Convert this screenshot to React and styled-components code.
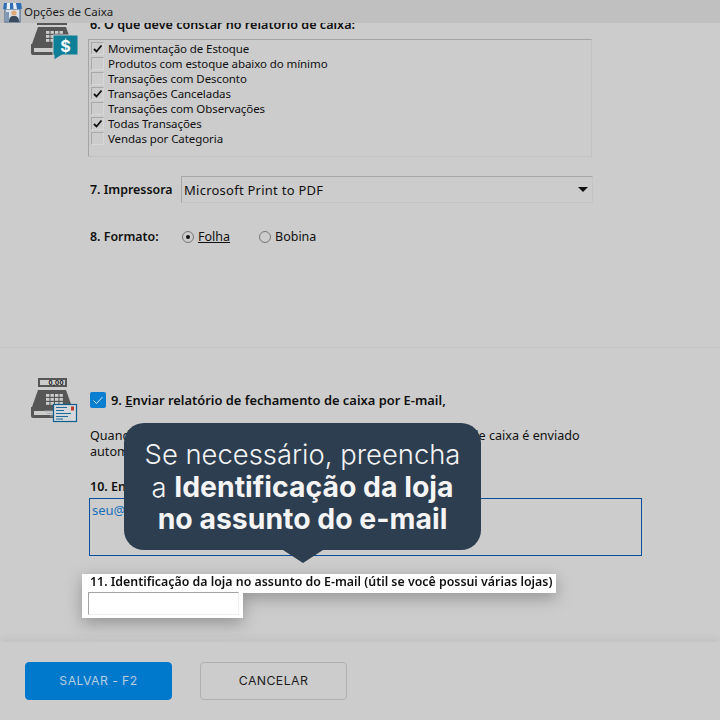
import React from 'react';
import styled, { createGlobalStyle } from 'styled-components';

const GlobalStyle = createGlobalStyle`
  html, body {
    margin: 0;
    padding: 0;
    background: #cccccc;
  }
`;

const Page = styled.div`
  position: relative;
  width: 720px;
  height: 720px;
  overflow: hidden;
  display: flex;
  flex-direction: column;
  background: #cccccc;
  font-family: 'Noto Sans', 'Open Sans', sans-serif;
  color: #101010;
`;

const TitleBar = styled.div`
  position: relative;
  z-index: 2;
  flex: 0 0 23px;
  display: flex;
  align-items: center;
  gap: 2px;
  padding-left: 3px;
  background: #c0c0c0;
  font-size: 11.5px;
  color: #1a1a1a;
`;

const PrintSection = styled.section`
  flex: 0 0 324px;
  display: flex;
  overflow: hidden;
  padding-left: 30px;
  border-bottom: 1px solid #c2c2c2;
`;

const IconColumn = styled.div`
  flex: 0 0 ${props => props.width}px;
`;

const Content = styled.div`
  flex: 1;
  margin-top: -7px;
`;

const Heading = styled.div`
  height: 18px;
  line-height: 18px;
  margin-left: 2px;
  font-size: 12.6px;
  font-weight: 600;
`;

const CheckList = styled.div`
  width: 500px;
  height: 115px;
  margin-top: 5px;
  padding: 1px 0 0 2px;
  border: 1px solid #a4a4a4;
  border-right-color: #c2c2c2;
  border-bottom-color: #c2c2c2;
`;

const CheckRow = styled.div`
  display: flex;
  align-items: center;
  gap: 4px;
  height: 15px;
  font-size: 11.5px;
  letter-spacing: -0.08px;
`;

const CheckBox = styled.span`
  flex: 0 0 11px;
  height: 11px;
  display: flex;
  align-items: center;
  justify-content: center;
  border: 1px solid #d8d8d8;
  border-top-color: #a8a8a8;
  border-left-color: #a8a8a8;
`;

const PrinterRow = styled.div`
  display: flex;
  align-items: center;
  margin: 19px 0 0 2px;
`;

const FieldLabel = styled.span`
  width: 91px;
  font-size: 12.4px;
  font-weight: 600;
`;

const Select = styled.div`
  width: 404px;
  height: 25px;
  display: flex;
  align-items: center;
  justify-content: space-between;
  padding: 0 4px 0 2px;
  border: 1px solid #a8a8a8;
  border-right-color: #c4c4c4;
  border-bottom-color: #c4c4c4;
  font-size: 13px;
  letter-spacing: 0.25px;
`;

const Arrow = styled.span`
  width: 0;
  height: 0;
  border-left: 5px solid transparent;
  border-right: 5px solid transparent;
  border-top: 5px solid #111;
`;

const FormatRow = styled.div`
  display: flex;
  align-items: center;
  margin: 25px 0 0 2px;
`;

const RadioOption = styled.span`
  box-sizing: border-box;
  display: flex;
  align-items: center;
  gap: 4px;
  width: 77px;
  padding-left: 1px;
  font-size: 12.5px;
`;

const Radio = styled.span`
  width: 10px;
  height: 10px;
  border: 1px solid #777;
  border-radius: 50%;
  display: flex;
  align-items: center;
  justify-content: center;
  &::after {
    content: '';
    width: 4px;
    height: 4px;
    border-radius: 50%;
    background: ${props => (props.checked ? '#111' : 'transparent')};
  }
`;

const Underlined = styled.span`
  text-decoration: underline;
`;

const EmailSection = styled.section`
  flex: 1;
  display: flex;
  padding: 30px 0 0 30px;
`;

const EmailContent = styled.div`
  padding-top: 14px;
`;

const EmailToggle = styled.div`
  display: flex;
  align-items: center;
  gap: 5px;
  height: 16px;
  font-size: 12.9px;
  font-weight: 600;
`;

const BlueCheck = styled.span`
  width: 16px;
  height: 16px;
  border-radius: 2px;
  background: #0a7fd2;
  display: flex;
  align-items: center;
  justify-content: center;
`;

const Paragraph = styled.p`
  margin: 20px 0 0;
  font-size: 12.6px;
  line-height: 16px;
  white-space: nowrap;
`;

const EmailLabel = styled.div`
  margin-top: 18px;
  font-size: 12.5px;
  font-weight: 600;
  line-height: 18px;
`;

const EmailBox = styled.div`
  width: 547px;
  height: 52px;
  margin: 2px 0 0 -1px;
  padding: 2px;
  border: 1px solid #0b4f9c;
  font-size: 13px;
  color: #1670b8;
`;

const Highlight = styled.div`
  display: flex;
  flex-direction: column;
  align-items: flex-start;
  margin: 18px 0 0 -8px;
  filter: drop-shadow(0 5px 8px rgba(0, 0, 0, 0.28));
`;

const HighlightLabel = styled.div`
  height: 19px;
  line-height: 16px;
  padding: 0 4px 0 8px;
  background: #fff;
  font-size: 12.37px;
  font-weight: 600;
  white-space: nowrap;
`;

const InputFrame = styled.div`
  margin-top: -1px;
  padding: 0 4px 3px 6px;
  background: #fff;
`;

const Input = styled.div`
  width: 149px;
  height: 21px;
  border: 1px solid #eeeeee;
  border-top-color: #a4a4a4;
  border-left-color: #a4a4a4;
`;

const Footer = styled.footer`
  flex: 0 0 78px;
  display: flex;
  align-items: flex-start;
  gap: 28px;
  padding: 20px 0 0 25px;
  box-sizing: border-box;
  box-shadow: 0 -3px 8px rgba(0, 0, 0, 0.06);
`;

const Button = styled.button`
  width: 147px;
  height: 38px;
  padding: 0 0 2px;
  border-radius: 4px;
  border: 1px solid ${props => (props.primary ? '#0078cc' : '#b0b0b0')};
  background: ${props => (props.primary ? '#0078cc' : 'transparent')};
  color: ${props => (props.primary ? '#b4cfe2' : '#1c1c1c')};
  font-family: Inter, sans-serif;
  font-size: 12.3px;
  letter-spacing: 0.4px;
`;

const Bubble = styled.div`
  position: absolute;
  z-index: 3;
  left: 124px;
  top: 423px;
  width: 357px;
  height: 127px;
  box-sizing: border-box;
  padding-top: 15px;
  border-radius: 20px;
  background: #2d3e50;
  color: #f4f4f4;
  font-family: Inter, sans-serif;
  font-size: 27.4px;
  font-weight: 300;
  line-height: 32.5px;
  text-align: center;
  strong {
    font-size: 28.4px;
    font-weight: 700;
  }
  &::after {
    content: '';
    position: absolute;
    left: 159px;
    bottom: -13px;
    border-left: 20px solid transparent;
    border-right: 20px solid transparent;
    border-top: 13px solid #2d3e50;
  }
`;

const TICK = 'M2 6 L4.5 8.5 L9.5 2.5';

function StoreIcon() {
  return (
    <svg width="19" height="22" viewBox="0 0 19 22">
      <rect x="2" y="8" width="15" height="13" fill="#d9e2ea" stroke="#3d5f86" />
      <path d="M1 2h17l1 6H0z" fill="#2f6fb5" />
      <path d="M4 2h3v6H3.500zM10 2h3l1 6h-3.500z" fill="#e8eef3" />
      <circle cx="11" cy="12" r="2.600" fill="#e2a878" />
      <path d="M6 21c0-5 2-6 5-6s5 1 5 6z" fill="#3a4a5c" />
      <rect x="3" y="11" width="3" height="10" fill="#7f99b5" />
    </svg>
  );
}

function RegisterBody() {
  const keys = [];
  for (let row = 0; row < 3; row++) {
    for (let col = 0; col < 4; col++) {
      keys.push(<rect key={row + '-' + col} x={16 + col * 4.500} y={10 + row * 4} width="3.400" height="2.800" fill="#cccccc" />);
    }
  }
  return (
    <>
      <path d="M8 6 H36 L42 23 H2 Z" fill="#565656" />
      <path d="M1 23 H43 V32 Q43 34 41 34 H3 Q1 34 1 32 Z" fill="#565656" />
      <rect x="4" y="27" width="24" height="4" fill="#cccccc" />
      {keys}
    </>
  );
}

function CashIcon() {
  return (
    <svg width="48" height="38" viewBox="0 0 48 38">
      <rect x="7" y="0" width="30" height="2" fill="#565656" />
      <g transform="translate(0,-2)"><RegisterBody /></g>
      <path d="M23 12 H48 V32 H32 L24 37 V32 H23 Z" fill="#0d7f96" stroke="#cccccc" />
      <text x="35.500" y="29" fill="#f4f8f8" fontFamily="Inter, sans-serif" fontWeight="700" fontSize="16" textAnchor="middle">$</text>
    </svg>
  );
}

function MailCashIcon() {
  return (
    <svg width="48" height="46" viewBox="0 0 48 46">
      <rect x="8" y="0" width="29" height="9" fill="#565656" />
      <rect x="10" y="2" width="25" height="5" fill="#cccccc" />
      <text x="34" y="6.800" fill="#111" fontFamily="Inter, sans-serif" fontWeight="700" fontSize="6" letterSpacing="0.4" textAnchor="end">0,00</text>
      <g transform="translate(0,6)"><RegisterBody /></g>
      <path d="M14 33h9M17 35.500h6M20 38h3" stroke="#9aa5ad" strokeWidth="0.800" />
      <rect x="23.500" y="26.500" width="23" height="17" fill="#d4d8da" stroke="#0f5f8f" strokeWidth="1.200" />
      <rect x="41" y="28.500" width="3" height="4" fill="#c0392b" />
      <path d="M26 29.500h11M26 32.500h8M26 35.500h15M26 38.500h12M26 41h7" stroke="#1b6a9c" strokeWidth="1" />
    </svg>
  );
}

const REPORT_ITEMS = [
  { label: 'Movimentação de Estoque', checked: true },
  { label: 'Produtos com estoque abaixo do mínimo', checked: false },
  { label: 'Transações com Desconto', checked: false },
  { label: 'Transações Canceladas', checked: true },
  { label: 'Transações com Observações', checked: false },
  { label: 'Todas Transações', checked: true },
  { label: 'Vendas por Categoria', checked: false },
];

export default function App() {
  return (
    <Page>
      <GlobalStyle />
      <TitleBar>
        <StoreIcon />
        Opções de Caixa
      </TitleBar>

      <PrintSection>
        <IconColumn width={58}>
          <CashIcon />
        </IconColumn>
        <Content>
          <Heading>6. O que deve constar no relatório de caixa:</Heading>
          <CheckList>
            {REPORT_ITEMS.map(item => (
              <CheckRow key={item.label}>
                <CheckBox>
                  {item.checked && (
                    <svg width="11" height="11" viewBox="0 0 11 11">
                      <path d={TICK} fill="none" stroke="#111" strokeWidth="1.800" />
                    </svg>
                  )}
                </CheckBox>
                {item.label}
              </CheckRow>
            ))}
          </CheckList>
          <PrinterRow>
            <FieldLabel>7. Impressora</FieldLabel>
            <Select>
              Microsoft Print to PDF
              <Arrow />
            </Select>
          </PrinterRow>
          <FormatRow>
            <FieldLabel>8. Formato:</FieldLabel>
            <RadioOption>
              <Radio checked />
              <Underlined>Folha</Underlined>
            </RadioOption>
            <RadioOption>
              <Radio />
              Bobina
            </RadioOption>
          </FormatRow>
        </Content>
      </PrintSection>

      <EmailSection>
        <IconColumn width={60}>
          <MailCashIcon />
        </IconColumn>
        <EmailContent>
          <EmailToggle>
            <BlueCheck>
              <svg width="12" height="12" viewBox="0 0 12 12">
                <path d="M1.500 6.500 L4.500 9.500 L10.500 3" fill="none" stroke="#d8ecf8" strokeWidth="1" />
              </svg>
            </BlueCheck>
            <span>9. <Underlined>E</Underlined>nviar relatório de fechamento de caixa por E-mail,</span>
          </EmailToggle>
          <Paragraph>
            Quando habilitado, ao fechar o caixa, o relatório de fechamento de caixa é enviado
            <br />
            automaticamente
          </Paragraph>
          <EmailLabel>10. Enviar para</EmailLabel>
          <EmailBox>seu@email.com</EmailBox>
          <Highlight>
            <HighlightLabel>11. Identificação da loja no assunto do E-mail (útil se você possui várias lojas)</HighlightLabel>
            <InputFrame>
              <Input />
            </InputFrame>
          </Highlight>
        </EmailContent>
      </EmailSection>

      <Footer>
        <Button primary>SALVAR - F2</Button>
        <Button>CANCELAR</Button>
      </Footer>

      <Bubble>
        Se necessário, preencha
        <br />
        a <strong>Identificação da loja</strong>
        <br />
        <strong>no assunto do e-mail</strong>
      </Bubble>
    </Page>
  );
}
